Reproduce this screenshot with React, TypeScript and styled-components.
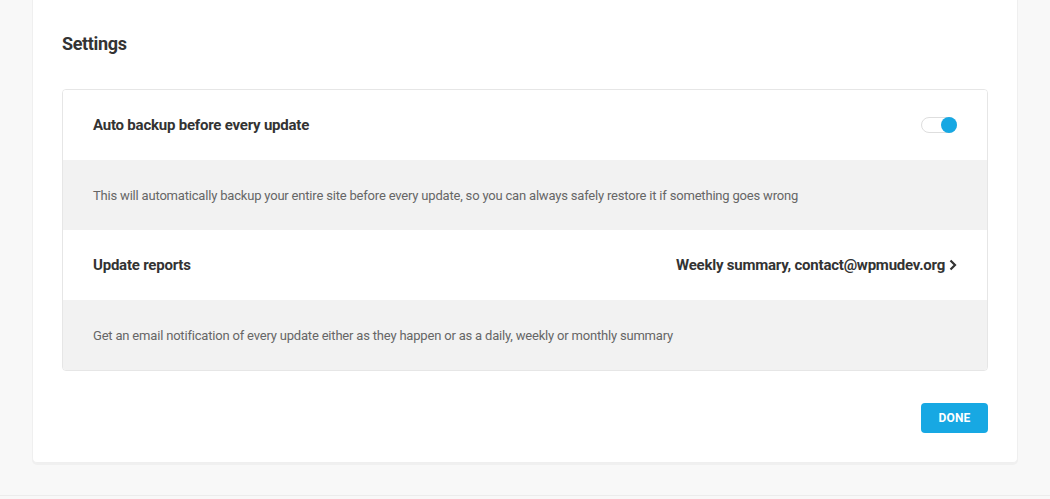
import React, { useState } from 'react'
import styled, { createGlobalStyle } from 'styled-components'

const GlobalStyle = createGlobalStyle`
    body {
        margin: 0;
        background: #f8f8f8;
        font-family: Roboto, "Liberation Sans", Arial, sans-serif;
        -webkit-font-smoothing: antialiased;
    }
`

const Page = styled.div`
    padding: 0 32px;
    height: 495px;
    border-bottom: 1px solid #ececec;
`

const Card = styled.div`
    background: #fff;
    border: 1px solid #efefef;
    border-top: none;
    border-radius: 0 0 5px 5px;
    box-shadow: 0 2px 0 #f0f0f0;
    padding: 32px 29px 29px 29px;
`

const Title = styled.h2`
    margin: 0 0 33px;
    font-size: 18px;
    line-height: 24px;
    font-weight: 700;
    letter-spacing: -0.35px;
    color: #333;
`

const Box = styled.div`
    border: 1px solid #e6e6e6;
    border-radius: 4px;
    overflow: hidden;
`

const Row = styled.div`
    display: flex;
    align-items: center;
    justify-content: space-between;
    height: 70px;
    padding: 0 30px;
    background: #fff;
    & + & {
        border-top: 1px solid #e6e6e6;
    }
`

const Label = styled.span`
    font-size: 15px;
    font-weight: 700;
    letter-spacing: -0.22px;
    color: #333;
`

const Description = styled.div`
    height: 70px;
    display: flex;
    align-items: center;
    padding: 0 30px;
    background: #f2f2f2;
    font-size: 13px;
    letter-spacing: -0.19px;
    color: #666;
`

const Toggle = styled.button<{ $on: boolean }>`
    position: relative;
    width: 36px;
    height: 16px;
    padding: 0;
    border: 1px solid #dedede;
    border-radius: 8px;
    background: #fff;
    cursor: pointer;
    &::after {
        content: '';
        position: absolute;
        top: -1px;
        left: ${p => (p.$on ? '19px' : '-1px')};
        width: 16px;
        height: 16px;
        border-radius: 50%;
        background: ${p => (p.$on ? '#17a8e3' : '#aaa')};
    }
`

const LinkValue = styled.span`
    display: flex;
    align-items: center;
    gap: 4px;
    font-size: 15px;
    font-weight: 700;
    letter-spacing: -0.22px;
    color: #333;
`

const Footer = styled.div`
    display: flex;
    justify-content: flex-end;
    margin-top: 32px;
`

const DoneButton = styled.button`
    width: 67px;
    height: 30px;
    border: none;
    border-radius: 4px;
    background: #17a8e3;
    color: #fff;
    font-family: inherit;
    font-size: 12px;
    font-weight: 700;
    letter-spacing: 0.2px;
    cursor: pointer;
`

const App: React.FunctionComponent = () => {
    const [autoBackup, setAutoBackup] = useState(true)

    return (
        <>
            <GlobalStyle />
            <Page>
                <Card>
                    <Title>Settings</Title>
                    <Box>
                        <Row>
                            <Label>Auto backup before every update</Label>
                            <Toggle $on={autoBackup} onClick={() => setAutoBackup(!autoBackup)} />
                        </Row>
                        <Description>
                            This will automatically backup your entire site before every update, so you can always safely restore it if something goes wrong
                        </Description>
                        <Row>
                            <Label>Update reports</Label>
                            <LinkValue>
                                Weekly summary, contact@wpmudev.org
                                <svg width="8" height="12" viewBox="0 0 8 12">
                                    <path d="M1.5 1.5 L6 6 L1.5 10.5" fill="none" stroke="#333" strokeWidth="2.2" />
                                </svg>
                            </LinkValue>
                        </Row>
                        <Description>
                            Get an email notification of every update either as they happen or as a daily, weekly or monthly summary
                        </Description>
                    </Box>
                    <Footer>
                        <DoneButton>DONE</DoneButton>
                    </Footer>
                </Card>
            </Page>
        </>
    )
}

export default App
